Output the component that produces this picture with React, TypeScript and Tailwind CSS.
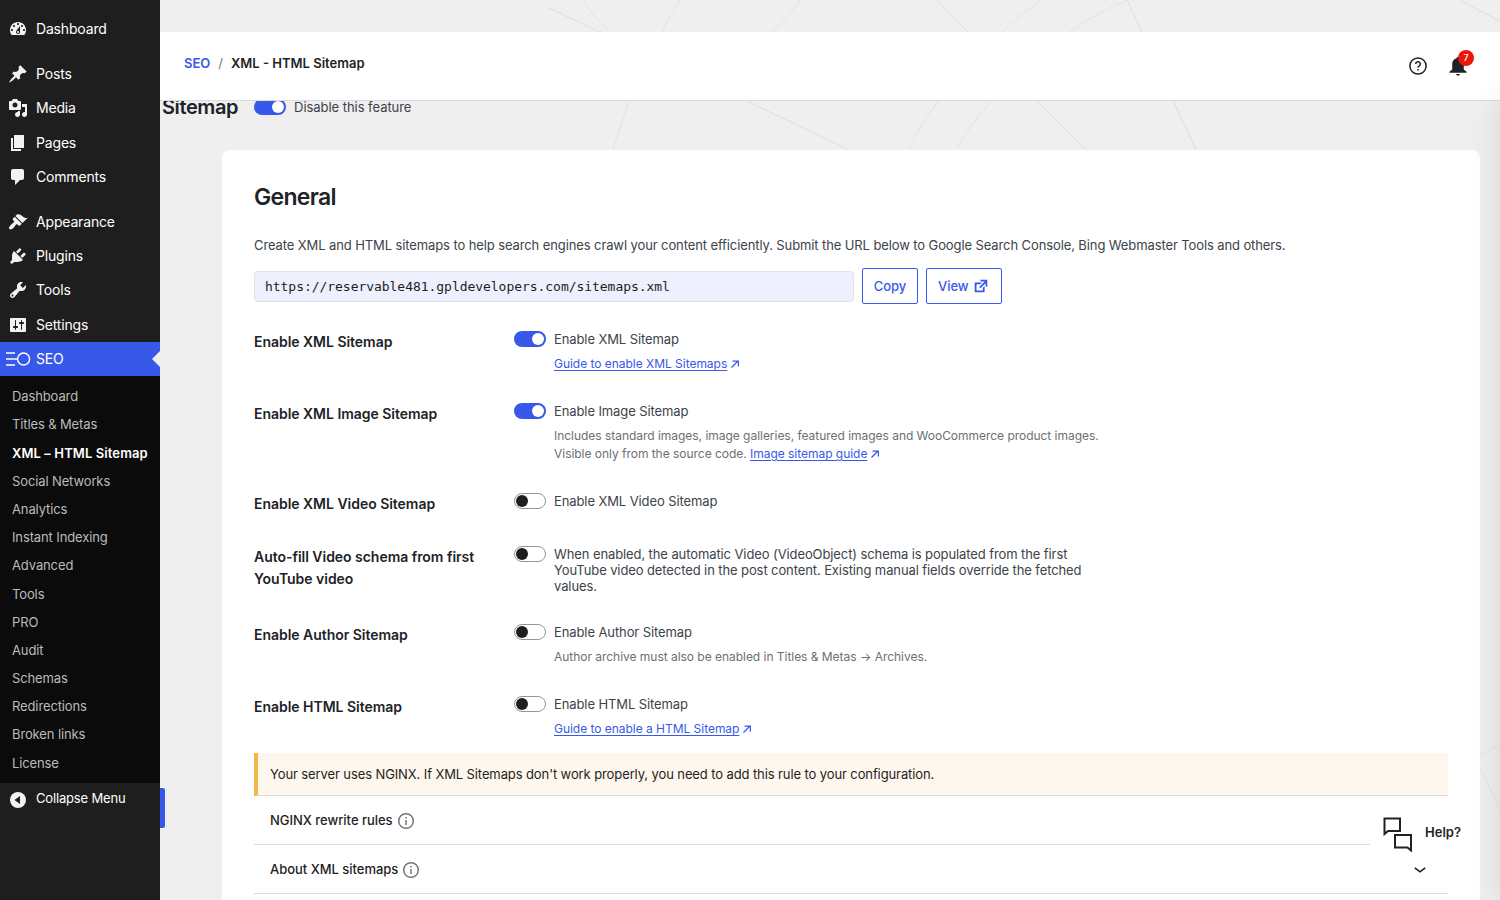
import { useState } from 'react'
import type { ReactNode } from 'react'

const menuGroups = [
  [
    {
      label: 'Dashboard',
      d: 'M3.76 16h12.48c1.1-1.37 1.76-3.11 1.76-5 0-4.42-3.58-8-8-8s-8 3.58-8 8c0 1.89.66 3.63 1.76 5zM10 4c.55 0 1 .45 1 1s-.45 1-1 1-1-.45-1-1 .45-1 1-1zM6 6c.55 0 1 .45 1 1s-.45 1-1 1-1-.45-1-1 .45-1 1-1zm8 0c.55 0 1 .45 1 1s-.45 1-1 1-1-.45-1-1 .45-1 1-1zm-5.37 5.55L12 7v6c0 1.1-.9 2-2 2s-2-.9-2-2c0-.57.24-1.08.63-1.45zM4 10c.55 0 1 .45 1 1s-.45 1-1 1-1-.45-1-1 .45-1 1-1zm12 0c.55 0 1 .45 1 1s-.45 1-1 1-1-.45-1-1 .45-1 1-1zm-5 3c0-.55-.45-1-1-1s-1 .45-1 1 .45 1 1 1 1-.45 1-1z',
    },
  ],
  [
    {
      label: 'Posts',
      d: 'M10.44 3.02l1.82-1.82 6.36 6.35-1.83 1.82c-1.05-.68-2.48-.57-3.41.36l-.75.75c-.92.93-1.04 2.35-.35 3.41l-1.83 1.82-2.41-2.41-2.8 2.79c-.42.42-3.38 2.71-3.8 2.29s1.86-3.39 2.28-3.81l2.79-2.79L4.1 9.36l1.83-1.82c1.05.69 2.48.57 3.4-.36l.75-.75c.93-.92 1.05-2.35.36-3.41z',
    },
    {
      label: 'Media',
      d: 'M13 11V4c0-.55-.45-1-1-1h-1.67L9 1H5L3.67 3H2c-.55 0-1 .45-1 1v7c0 .55.45 1 1 1h10c.55 0 1-.45 1-1zM7 4.5c1.38 0 2.5 1.12 2.5 2.5S8.38 9.5 7 9.5 4.5 8.38 4.5 7 5.62 4.5 7 4.5zM14 6h5v10.5c0 1.38-1.12 2.5-2.5 2.5S14 17.88 14 16.5s1.12-2.5 2.5-2.5c.17 0 .34.02.5.05V9h-3V6zm-4 8.05V13h2v3.5c0 1.38-1.12 2.5-2.5 2.5S7 17.88 7 16.5 8.12 14 9.5 14c.17 0 .34.02.5.05z',
    },
    { label: 'Pages', d: 'M6 15V2h10v13H6zm-1 1h8v2H3V5h2v11z' },
    {
      label: 'Comments',
      d: 'M5 2h9c1.1 0 2 .9 2 2v7c0 1.1-.9 2-2 2h-2l-5 5v-5H5c-1.1 0-2-.9-2-2V4c0-1.1.9-2 2-2z',
    },
  ],
  [
    {
      label: 'Appearance',
      d: 'M14.48 11.06L7.41 3.99l1.5-1.5c.5-.56 2.3-.47 3.51.32 1.21.8 1.43 1.28 2.91 2.1 1.18.64 2.45 1.26 4.45.85zm-.71.71L6.7 4.7 4.93 6.47c-.39.39-.39 1.02 0 1.41l1.06 1.06c.39.39.39 1.03 0 1.42-.6.6-1.43 1.11-2.21 1.69-.35.26-.7.53-1.01.84C1.43 14.23.4 16.08 1.4 17.07c.99 1 2.84-.03 4.18-1.36.31-.31.58-.66.85-1.02.57-.78 1.08-1.61 1.69-2.21.39-.39 1.02-.39 1.41 0l1.06 1.06c.39.39 1.02.39 1.41 0z',
    },
    {
      label: 'Plugins',
      d: 'M13.11 4.36L9.87 7.6 8 5.73l3.24-3.24c.35-.34 1.05-.2 1.56.32.52.51.66 1.21.31 1.55zm-8 1.77l.91-1.12 9.01 9.01-1.19.84c-.71.71-2.63 1.16-3.82 1.16H6.14L4.9 17.26c-.59.59-1.54.59-2.12 0-.59-.58-.59-1.53 0-2.12l1.24-1.24v-3.88c0-1.13.4-3.19 1.09-3.89zm7.26 3.97l3.24-3.24c.34-.35 1.04-.21 1.55.31.52.51.66 1.21.31 1.55l-3.24 3.25z',
    },
    {
      label: 'Tools',
      d: 'M16.68 9.77c-1.34 1.34-3.3 1.67-4.95.99l-5.41 6.52c-.99.99-2.59.99-3.58 0s-.99-2.59 0-3.57l6.52-5.42c-.68-1.65-.35-3.61.99-4.95 1.28-1.28 3.12-1.62 4.72-1.06l-2.89 2.89 2.82 2.82 2.86-2.87c.53 1.58.18 3.39-1.08 4.65zM3.81 16.21c.4.39 1.04.39 1.43 0 .4-.4.4-1.04 0-1.43-.39-.4-1.03-.4-1.43 0-.39.39-.39 1.03 0 1.43z',
    },
    {
      label: 'Settings',
      d: 'M18 16V4c0-.55-.45-1-1-1H3c-.55 0-1 .45-1 1v12c0 .55.45 1 1 1h14c.55 0 1-.45 1-1zM8 11h1c.55 0 1 .45 1 1s-.45 1-1 1H8v1.5c0 .28-.22.5-.5.5s-.5-.22-.5-.5V13H6c-.55 0-1-.45-1-1s.45-1 1-1h1V5.5c0-.28.22-.5.5-.5s.5.22.5.5V11zm5-2h-1c-.55 0-1-.45-1-1s.45-1 1-1h1V5.5c0-.28.22-.5.5-.5s.5.22.5.5V7h1c.55 0 1 .45 1 1s-.45 1-1 1h-1v5.5c0 .28-.22.5-.5.5s-.5-.22-.5-.5V9z',
    },
  ],
]

const subMenu = [
  'Dashboard',
  'Titles & Metas',
  'XML – HTML Sitemap',
  'Social Networks',
  'Analytics',
  'Instant Indexing',
  'Advanced',
  'Tools',
  'PRO',
  'Audit',
  'Schemas',
  'Redirections',
  'Broken links',
  'License',
]

function Sidebar() {
  return (
    <aside className="w-40 shrink-0 bg-[#1e1e1e] pt-3 text-white">
      <div className="flex flex-col gap-[11px]">
        {menuGroups.map((group, i) => (
          <ul key={i}>
            {group.map((item) => (
              <li
                key={item.label}
                className="flex h-[34.2px] items-center pl-2 text-sm tracking-[-0.17px]"
              >
                <svg viewBox="0 0 20 20" className="mr-2 size-5 fill-[#f3f1f1]">
                  <path d={item.d} />
                </svg>
                {item.label}
              </li>
            ))}
          </ul>
        ))}
      </div>
      <div className="relative flex h-[34.2px] items-center bg-[#3858e9] pl-1.5 text-sm tracking-[-0.17px]">
        <svg
          viewBox="0 0 25 20"
          className="mr-[5px] h-5 w-[25px] fill-none stroke-white"
          strokeWidth="1.4"
        >
          <path d="M0 4h9M0 10h11.5M0 16h9" />
          <circle cx="17.6" cy="10" r="6" />
        </svg>
        SEO
        <span className="absolute top-[9px] right-0 border-y-8 border-r-8 border-y-transparent border-r-[#efefef]" />
      </div>
      <ul className="bg-[#0b0b0b] pt-[7px] pb-[5px] text-[13px]">
        {subMenu.map((item, i) => (
          <li
            key={item}
            className={
              i === 2
                ? 'flex h-[28.2px] items-center pl-3 font-semibold tracking-[0.1px] whitespace-nowrap text-white'
                : 'flex h-[28.2px] items-center pl-3 tracking-[-0.12px] text-[#bbbbbb]'
            }
          >
            {item}
          </li>
        ))}
      </ul>
      <div className="flex h-8 items-center pl-2 text-[13px] tracking-[-0.17px]">
        <svg viewBox="0 0 20 20" className="mt-0.5 mr-2 size-5">
          <circle cx="10" cy="10" r="8" fill="#f3f1f1" />
          <path d="M12 6v8l-5.500-4z" fill="#1e1e1e" />
        </svg>
        Collapse Menu
      </div>
    </aside>
  )
}

function Toggle({ initial = false }: { initial?: boolean }) {
  const [on, setOn] = useState(initial)

  return (
    <button
      onClick={() => setOn(!on)}
      className={
        on
          ? 'flex h-4 w-8 shrink-0 items-center justify-end rounded-full bg-[#3858e9] pr-0.5'
          : 'flex h-4 w-8 shrink-0 items-center rounded-full border border-[#949494] bg-white pl-px'
      }
    >
      <span
        className={
          on ? 'size-3 rounded-full bg-white' : 'size-3 rounded-full bg-[#1e1e1e]'
        }
      />
    </button>
  )
}

function GuideLink({ children }: { children: ReactNode }) {
  return (
    <span className="text-[#3858e9]">
      <a href="#" className="underline underline-offset-2">
        {children}
      </a>
      <svg
        viewBox="0 0 8 8"
        className="ml-1 inline size-2 fill-none stroke-[#3858e9] align-baseline"
        strokeWidth="1.25"
      >
        <path d="M.5 7.5l6.500-6.500M1.500 1h5.900v5.600" />
      </svg>
    </span>
  )
}

function Field({
  label,
  text,
  on,
  children,
}: {
  label: string
  text: string
  on?: boolean
  children?: ReactNode
}) {
  return (
    <div className="mb-[30px] flex min-h-[23px] last:mb-0">
      <div className="-mb-2 w-[260px] shrink-0 pr-5 text-sm leading-[22px] font-semibold tracking-[-0.03px] text-[#1d2327]">
        {label}
      </div>
      <Toggle initial={on} />
      <div className="ml-2 w-[560px]">
        <p className="text-[13px] leading-4 tracking-[-0.1px]">{text}</p>
        {children && (
          <p className="mt-2 text-xs leading-[18px] tracking-[-0.03px] text-[#6c6f73]">
            {children}
          </p>
        )}
      </div>
    </div>
  )
}

function Accordion({ title }: { title: string }) {
  return (
    <div className="flex h-[49px] items-center border-b border-[#dddddd] px-4 text-[13px] font-medium tracking-[-0.03px] text-[#1e1e1e]">
      <span className="pt-0.5">{title}</span>
      <svg
        viewBox="0 0 18 18"
        className="mt-px ml-1 size-[18px] fill-none stroke-[#757575]"
        strokeWidth="1.5"
      >
        <circle cx="9" cy="9" r="7.3" />
        <path d="M9 8v5M9 5v1.500" />
      </svg>
      <svg
        viewBox="0 0 12 6"
        className="mt-0.5 mr-1.5 ml-auto h-1.5 w-3 fill-none stroke-[#1e1e1e]"
        strokeWidth="1.6"
      >
        <path d="M.8 .8L6 4.800 11.200 .8" />
      </svg>
    </div>
  )
}

export default function App() {
  return (
    <div className="relative flex h-[900px] w-[1500px] overflow-hidden bg-[#efefef] font-[Inter,sans-serif] text-[#3c434a]">
      <Sidebar />
      <main className="relative flex-1">
        <svg
          viewBox="160 0 1340 900"
          className="absolute inset-0 h-[900px] w-[1340px] fill-none stroke-[#dedede]"
        >
          <path d="M549 8L600 32L745 100L849 150M937 0L968 32L1036 100L1086 150M1127 0L1142 32L1173 100L1196 150M1459 0L1500 21" />
          <path
            stroke="#e3e3e3"
            d="M583 0Q592 16 610 32M680 0Q670 16 662 32M800 0Q789 18 772 32M630 100Q620 125 613 150M1042 0Q1020 15 1002 32M939 100Q920 125 908 150M1127 0Q1098 12 1069 32M992 100Q970 125 956 150M1480 755L1500 745M1480 767L1500 810"
          />
        </svg>

        <header className="relative z-10 mt-8 flex h-[69px] justify-between border-b border-[#dcdcde] bg-white pr-[33px] pl-6">
          <nav className="mt-[22px] flex h-5 items-center text-[13px] font-semibold text-[#1d2327]">
            <a href="#" className="text-[#3858e9]">
              SEO
            </a>
            <span className="mx-2 font-normal text-[#757575]">/</span>
            XML - HTML Sitemap
          </nav>
          <div className="flex items-center gap-[22px]">
            <svg
              viewBox="0 0 18 18"
              className="size-[18px] fill-none stroke-[#1d2327]"
              strokeWidth="1.5"
            >
              <circle cx="9" cy="9" r="8.1" />
              <path d="M6.700 7.100a2.300 2.300 0 1 1 3.400 2Q9 9.700 9 10.800M9 12v1.400" />
            </svg>
            <div className="relative">
              <svg viewBox="0 0 18 20" className="h-5 w-[18px] fill-[#1d2327]">
                <path d="M9 1c-.8 0-1.3.5-1.4 1.2C4.900 2.900 3.200 5.100 3.200 8v5.500L.4 15.800v.9h17.200v-.9L14.800 13.500V8c0-2.900-1.700-5.100-4.400-5.800C10.300 1.500 9.800 1 9 1zM7 17.900h4q-.5 1.800-2 1.800t-2-1.800z" />
              </svg>
              <span className="absolute -top-1.5 left-[9px] flex size-4 items-center justify-center rounded-full bg-[#eb1508] text-[9px] font-medium text-white">
                7
              </span>
            </div>
          </div>
        </header>

        <div className="relative flex h-3 items-center pl-0.5">
          <h1 className="text-xl font-semibold tracking-[-0.4px] text-[#1d2327]">
            Sitemap
          </h1>
          <span className="ml-4 flex items-center gap-2 text-[13px] tracking-[-0.05px]">
            <Toggle initial />
            <span className="pt-0.5">Disable this feature</span>
          </span>
        </div>

        <section className="relative mt-[37px] mr-5 ml-[62px] h-[760px] rounded-lg bg-white px-8 pt-8">
          <h2 className="text-[23px] leading-[30px] font-semibold tracking-[-0.7px] text-[#1d2327]">
            General
          </h2>
          <p className="mt-[23px] text-[13px] leading-5 tracking-[-0.105px] whitespace-nowrap">
            Create XML and HTML sitemaps to help search engines crawl your content
            efficiently. Submit the URL below to Google Search Console, Bing
            Webmaster Tools and others.
          </p>
          <div className="mt-[13px] flex items-center gap-2">
            <code className="mt-px flex h-[31px] w-[600px] items-center rounded border border-[#dfe1ea] bg-[#eef0fd] px-2.5 font-['DejaVu_Sans_Mono',monospace] text-[13px] tracking-[-0.04px] text-[#1e1e1e]">
              https://reservable481.gpldevelopers.com/sitemaps.xml
            </code>
            <button className="h-9 w-14 rounded-[2px] border border-[#3858e9] pt-0.5 text-[13px] font-medium text-[#3858e9]">
              Copy
            </button>
            <button className="flex h-9 w-19 items-center rounded-[2px] border border-[#3858e9] pl-[11px] text-[13px] font-medium tracking-[-0.05px] text-[#3858e9]">
              <span className="pt-0.5">View</span>
              <svg
                viewBox="0 0 20 20"
                className="ml-[3px] size-[18px] fill-[#3858e9]"
              >
                <path d="M9 3h8v8l-2-1V6.92l-5.6 5.59-1.41-1.41L14.08 5H10zm3 12v-3l2-2v7H3V6h8L9 8H5v7h7z" />
              </svg>
            </button>
          </div>

          <div className="mt-[27px]">
            <Field label="Enable XML Sitemap" text="Enable XML Sitemap" on>
              <GuideLink>Guide to enable XML Sitemaps</GuideLink>
            </Field>
            <Field label="Enable XML Image Sitemap" text="Enable Image Sitemap" on>
              Includes standard images, image galleries, featured images and
              WooCommerce product images.
              <br />
              Visible only from the source code.{' '}
              <GuideLink>Image sitemap guide</GuideLink>
            </Field>
            <Field
              label="Enable XML Video Sitemap"
              text="Enable XML Video Sitemap"
            />
            <Field
              label="Auto-fill Video schema from first YouTube video"
              text="When enabled, the automatic Video (VideoObject) schema is populated from the first YouTube video detected in the post content. Existing manual fields override the fetched values."
            />
            <Field label="Enable Author Sitemap" text="Enable Author Sitemap">
              Author archive must also be enabled in Titles &amp; Metas → Archives.
            </Field>
            <Field label="Enable HTML Sitemap" text="Enable HTML Sitemap">
              <GuideLink>Guide to enable a HTML Sitemap</GuideLink>
            </Field>
          </div>

          <div className="mt-[15px] flex h-[43px] items-center border-b border-l-4 border-b-[#dddddd] border-l-[#f0b849] bg-[#fef7ed] pt-0.5 pl-3 text-[13px] tracking-[-0.105px] text-[#1e1e1e]">
            Your server uses NGINX. If XML Sitemaps don't work properly, you need to
            add this rule to your configuration.
          </div>
          <Accordion title="NGINX rewrite rules" />
          <Accordion title="About XML sitemaps" />
        </section>
      </main>

      <div className="absolute top-[788px] left-40 h-10 w-[5px] rounded-r-[2px] bg-[#3858e9]" />

      {/* help launcher */}
      <button className="absolute top-[808px] left-[1370px] flex h-[50px] w-[110px] items-center bg-white pl-[13px] text-[13px] font-semibold text-[#1d2327]">
        <svg
          viewBox="0 0 30 35"
          className="mt-[3px] mr-3 h-[35px] w-[30px] fill-none stroke-[#1d2327]"
          strokeWidth="2"
        >
          <path d="M1.500 1.500H17V14H5L1.500 17z" />
          <path d="M12 18H28V33.500L24.500 30.500H12z" />
        </svg>
        Help?
      </button>

      {/* drawer parked outside the right edge */}
      <div className="absolute top-[100px] left-[1500px] z-20 h-[800px] w-72 bg-white shadow-[0_0_30px_rgba(30,30,60,0.12)]" />
    </div>
  )
}
